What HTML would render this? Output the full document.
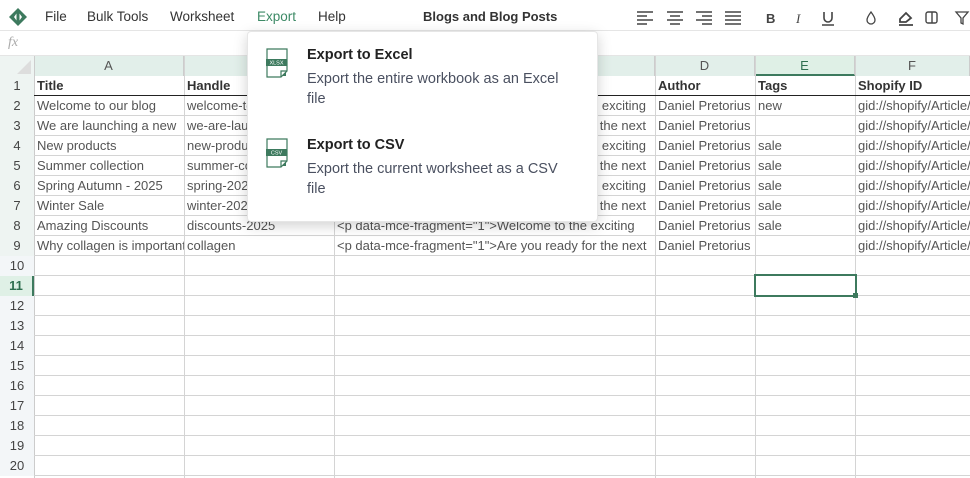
<!DOCTYPE html>
<html><head><meta charset="utf-8"><style>
*{margin:0;padding:0;box-sizing:border-box}
body{width:970px;height:478px;overflow:hidden;background:#fff;font-family:"Liberation Sans",sans-serif;position:relative;color:#555}
.a{position:absolute}
.menu span{position:absolute;top:9px;font-size:13.5px;color:#333}
.c{position:absolute;height:20px;line-height:20px;font-size:13px;padding-left:2px;white-space:nowrap;overflow:hidden;color:#555}
.h{font-weight:bold;color:#333}
.rn{position:absolute;left:0;width:34px;height:20px;line-height:20px;text-align:center;font-size:13px;color:#444;background:#eef4f2}
.col{position:absolute;top:56px;height:20px;line-height:20px;text-align:center;font-size:13px;color:#555;background:#e2efea;border-right:1px solid #ccc}
.vl{position:absolute;top:56px;width:1px;height:422px;background:#d4d4d4}
.hl{position:absolute;left:34px;width:936px;height:1px;background:#d4d4d4}
</style></head><body>
<div class="a" style="left:0;top:0;width:970px;height:31px;border-bottom:1px solid #e5e5e5"></div>
<svg class="a" style="left:9px;top:8px" width="18" height="18" viewBox="0 0 18 18"><path d="M9 0L18 9L9 18L0 9Z" fill="#3d7a5e"/><path d="M7.5 5.5L5 9L7.5 12.5ZM10.5 5.5L13 9L10.5 12.5Z" fill="#fff"/></svg>
<div class="menu">
<span style="left:45px">File</span><span style="left:87px">Bulk Tools</span><span style="left:170px">Worksheet</span><span style="left:257px;color:#3d8a66">Export</span><span style="left:318px">Help</span>
<span style="left:423px;font-weight:bold;font-size:13px;color:#333">Blogs and Blog Posts</span>
</div>
<svg class="a" style="left:636px;top:10px" width="334" height="16" viewBox="0 0 334 16" stroke="#444" stroke-width="1.6" fill="none">
<path d="M1 2h16M1 6h10M1 10h16M1 14h10"/>
<path d="M31 2h16M34 6h10M31 10h16M34 14h10"/>
<path d="M60 2h16M66 6h10M60 10h16M66 14h10"/>
<path d="M89 2h16M89 6h16M89 10h16M89 14h16"/>
<text x="130" y="13" font-size="13" font-weight="bold" fill="#444" stroke="none" font-family="Liberation Sans">B</text>
<text x="160" y="13" font-size="13" font-style="italic" fill="#444" stroke="none" font-family="Liberation Serif">I</text>
<path d="M188 2v6a4 4 0 0 0 8 0V2M186 15h12" />
<path d="M235 2c-3 4-4 6-4 8a4 4 0 0 0 8 0c0-2-1-4-4-8z" stroke-width="1.3"/>
<path d="M264 9l6-6 5 5-5 4h-6z M263 15h14" stroke-width="1.8"/>
<rect x="290" y="2" width="11" height="11" rx="2" stroke-width="1.4"/><path d="M296 2v11" stroke-width="1.4"/>
<path d="M320 2h12l-5 6v6l-2-1v-5z" stroke-width="1.3"/>
</svg>
<div class="a" style="left:8px;top:35px;font-family:'Liberation Serif',serif;font-style:italic;color:#aaa;font-size:14px">fx</div>
<div class="a" style="left:0;top:55px;width:970px;height:1px;background:#e5e5e5"></div>
<div class="a" style="left:0;top:56px;width:34px;height:20px;background:#eef4f2"></div>
<svg class="a" style="left:17px;top:60px" width="14" height="14"><path d="M14 0V14H0Z" fill="#ddd"/></svg>
<div class="col" style="left:34px;width:150px">A</div>
<div class="col" style="left:184px;width:150px">B</div>
<div class="col" style="left:334px;width:321px">C</div>
<div class="col" style="left:655px;width:100px">D</div>
<div class="col" style="left:755px;width:100px;background:#dff0e6;color:#2f6f50;border-bottom:2px solid #3d7a5e">E</div>
<div class="col" style="left:855px;width:115px">F</div>
<div class="a" style="left:34px;top:56px;width:1px;height:422px;background:#ccc"></div>
<div class="vl" style="left:184px"></div><div class="vl" style="left:334px"></div><div class="vl" style="left:655px"></div><div class="vl" style="left:755px"></div><div class="vl" style="left:855px"></div>
<div class="hl" style="top:95px;background:#222;left:0;width:970px"></div>
<div class="hl" style="top:115px"></div><div class="hl" style="top:135px"></div><div class="hl" style="top:155px"></div><div class="hl" style="top:175px"></div><div class="hl" style="top:195px"></div><div class="hl" style="top:215px"></div><div class="hl" style="top:235px"></div><div class="hl" style="top:255px"></div><div class="hl" style="top:275px"></div><div class="hl" style="top:295px"></div><div class="hl" style="top:315px"></div><div class="hl" style="top:335px"></div><div class="hl" style="top:355px"></div><div class="hl" style="top:375px"></div><div class="hl" style="top:395px"></div><div class="hl" style="top:415px"></div><div class="hl" style="top:435px"></div><div class="hl" style="top:455px"></div><div class="hl" style="top:475px"></div>
<div class="rn" style="top:76px">1</div><div class="rn" style="top:96px">2</div><div class="rn" style="top:116px">3</div><div class="rn" style="top:136px">4</div><div class="rn" style="top:156px">5</div><div class="rn" style="top:176px">6</div><div class="rn" style="top:196px">7</div><div class="rn" style="top:216px">8</div><div class="rn" style="top:236px">9</div><div class="rn" style="top:256px;background:#f3f6f8">10</div><div class="rn" style="top:276px;background:#dff0e6;color:#2f6f50;font-weight:bold;border-right:2px solid #3d7a5e">11</div><div class="rn" style="top:296px;background:#f3f6f8">12</div><div class="rn" style="top:316px;background:#f3f6f8">13</div><div class="rn" style="top:336px;background:#f3f6f8">14</div><div class="rn" style="top:356px;background:#f3f6f8">15</div><div class="rn" style="top:376px;background:#f3f6f8">16</div><div class="rn" style="top:396px;background:#f3f6f8">17</div><div class="rn" style="top:416px;background:#f3f6f8">18</div><div class="rn" style="top:436px;background:#f3f6f8">19</div><div class="rn" style="top:456px;background:#f3f6f8">20</div>
<div class="c h" style="left:35px;top:76px;width:149px">Title</div>
<div class="c h" style="left:185px;top:76px;width:149px">Handle</div>
<div class="c h" style="left:656px;top:76px;width:99px">Author</div>
<div class="c h" style="left:756px;top:76px;width:99px">Tags</div>
<div class="c h" style="left:856px;top:76px;width:114px">Shopify ID</div>

<div class="c" style="left:35px;top:96px;width:149px">Welcome to our blog</div>
<div class="c" style="left:35px;top:116px;width:149px">We are launching a new</div>
<div class="c" style="left:35px;top:136px;width:149px">New products</div>
<div class="c" style="left:35px;top:156px;width:149px">Summer collection</div>
<div class="c" style="left:35px;top:176px;width:149px">Spring Autumn - 2025</div>
<div class="c" style="left:35px;top:196px;width:149px">Winter Sale</div>
<div class="c" style="left:35px;top:216px;width:149px">Amazing Discounts</div>
<div class="c" style="left:35px;top:236px;width:149px">Why collagen is important</div>

<div class="c" style="left:185px;top:96px;width:149px">welcome-to-our-blog</div>
<div class="c" style="left:185px;top:116px;width:149px">we-are-launching</div>
<div class="c" style="left:185px;top:136px;width:149px">new-products</div>
<div class="c" style="left:185px;top:156px;width:149px">summer-collection</div>
<div class="c" style="left:185px;top:176px;width:149px">spring-2025</div>
<div class="c" style="left:185px;top:196px;width:149px">winter-2025</div>
<div class="c" style="left:185px;top:216px;width:149px">discounts-2025</div>
<div class="c" style="left:185px;top:236px;width:149px">collagen</div>

<div class="c" style="left:335px;top:96px;width:320px;text-align:right;padding-right:9px">exciting</div>
<div class="c" style="left:335px;top:116px;width:320px;text-align:right;padding-right:9px">the next</div>
<div class="c" style="left:335px;top:136px;width:320px;text-align:right;padding-right:9px">exciting</div>
<div class="c" style="left:335px;top:156px;width:320px;text-align:right;padding-right:9px">the next</div>
<div class="c" style="left:335px;top:176px;width:320px;text-align:right;padding-right:9px">exciting</div>
<div class="c" style="left:335px;top:196px;width:320px;text-align:right;padding-right:9px">the next</div>
<div class="c" style="left:335px;top:216px;width:320px">&lt;p data-mce-fragment="1"&gt;Welcome to the exciting</div>
<div class="c" style="left:335px;top:236px;width:320px">&lt;p data-mce-fragment="1"&gt;Are you ready for the next</div>

<div class="c" style="left:656px;top:96px">Daniel Pretorius</div><div class="c" style="left:656px;top:116px">Daniel Pretorius</div><div class="c" style="left:656px;top:136px">Daniel Pretorius</div><div class="c" style="left:656px;top:156px">Daniel Pretorius</div><div class="c" style="left:656px;top:176px">Daniel Pretorius</div><div class="c" style="left:656px;top:196px">Daniel Pretorius</div><div class="c" style="left:656px;top:216px">Daniel Pretorius</div><div class="c" style="left:656px;top:236px">Daniel Pretorius</div>

<div class="c" style="left:756px;top:96px">new</div><div class="c" style="left:756px;top:136px">sale</div><div class="c" style="left:756px;top:156px">sale</div><div class="c" style="left:756px;top:176px">sale</div><div class="c" style="left:756px;top:196px">sale</div><div class="c" style="left:756px;top:216px">sale</div>

<div class="c" style="left:856px;top:96px;width:114px">gid://shopify/Article/</div><div class="c" style="left:856px;top:116px;width:114px">gid://shopify/Article/</div><div class="c" style="left:856px;top:136px;width:114px">gid://shopify/Article/</div><div class="c" style="left:856px;top:156px;width:114px">gid://shopify/Article/</div><div class="c" style="left:856px;top:176px;width:114px">gid://shopify/Article/</div><div class="c" style="left:856px;top:196px;width:114px">gid://shopify/Article/</div><div class="c" style="left:856px;top:216px;width:114px">gid://shopify/Article/</div><div class="c" style="left:856px;top:236px;width:114px">gid://shopify/Article/</div>

<div class="a" style="left:754px;top:274px;width:103px;height:23px;border:2px solid #3d7a5e"></div>
<div class="a" style="left:853px;top:293px;width:5px;height:5px;background:#3d7a5e"></div>

<div class="a" style="left:247px;top:31px;width:351px;height:191px;background:#fff;border-radius:4px;box-shadow:0 4px 14px rgba(0,0,0,.18);border:1px solid #e6e6e6"></div>
<svg class="a" style="left:266px;top:48px" width="22" height="30" viewBox="0 0 22 30"><path d="M1 1h20v22l-6 6H1z" fill="#fff" stroke="#3d7a5e" stroke-width="1.2"/><path d="M15 29v-6h6" fill="none" stroke="#3d7a5e" stroke-width="1.2"/><path d="M16 28l4-4v4z" fill="#3d7a5e"/><rect x="0" y="11" width="21" height="7" fill="#3d7a5e"/><text x="10.5" y="16.5" font-size="5.5" fill="#fff" text-anchor="middle" font-family="Liberation Sans">XLSX</text></svg>
<svg class="a" style="left:266px;top:138px" width="22" height="30" viewBox="0 0 22 30"><path d="M1 1h20v22l-6 6H1z" fill="#fff" stroke="#3d7a5e" stroke-width="1.2"/><path d="M15 29v-6h6" fill="none" stroke="#3d7a5e" stroke-width="1.2"/><path d="M16 28l4-4v4z" fill="#3d7a5e"/><rect x="0" y="11" width="21" height="7" fill="#3d7a5e"/><text x="10.5" y="16.5" font-size="5.5" fill="#fff" text-anchor="middle" font-family="Liberation Sans">CSV</text></svg>
<div class="a" style="left:307px;top:47px;font-size:14.5px;font-weight:bold;color:#222">Export to Excel</div>
<div class="a" style="left:307px;top:69px;width:262px;font-size:14.5px;line-height:20px;color:#4a5060">Export the entire workbook as an Excel file</div>
<div class="a" style="left:307px;top:137px;font-size:14.5px;font-weight:bold;color:#222">Export to CSV</div>
<div class="a" style="left:307px;top:159px;width:262px;font-size:14.5px;line-height:20px;color:#4a5060">Export the current worksheet as a CSV file</div>
</body></html>
